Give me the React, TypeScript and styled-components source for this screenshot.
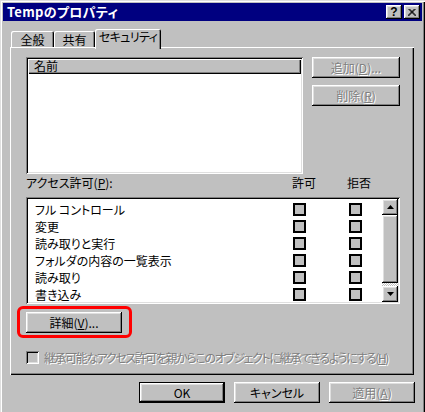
import React from "react";
import styled, { createGlobalStyle, css } from "styled-components";

const Global = createGlobalStyle`
  html, body { margin: 0; padding: 0; background: #c0c0c0; overflow: hidden; }
  body {
    font-family: "Noto Sans CJK JP", "Noto Sans", sans-serif;
    font-size: 12px;
    color: #000;
    font-feature-settings: "palt" 1;
  }
`;

const raised = css`
  box-shadow: inset -1px -1px #000, inset 1px 1px #fff, inset -2px -2px #808080,
    inset 2px 2px #dfdfdf;
`;

const sunken = css`
  box-shadow: inset 1px 1px #808080, inset -1px -1px #fff, inset 2px 2px #000,
    inset -2px -2px #dfdfdf;
`;

const Window = styled.div`
  width: 425px;
  height: 412px;
  box-sizing: border-box;
  background: #c0c0c0;
  box-shadow: inset 1px 1px #dfdfdf, inset 2px 2px #fff, inset -1px 0 #000,
    inset -2px 0 #808080;
  padding-top: 3px;
  display: flex;
  flex-direction: column;
`;

const TitleBar = styled.div`
  margin: 0 3px;
  height: 18px;
  background: #000080;
  color: #fff;
  display: flex;
  align-items: center;
  padding: 0 2px 0 4px;
`;

const TitleText = styled.span`
  font-weight: bold;
  font-size: 13px;
  line-height: 18px;
  letter-spacing: 0.3px;
`;

const CaptionGroup = styled.div`
  margin-left: auto;
  display: flex;
  gap: 2px;
`;

const CaptionButton = styled.div`
  width: 16px;
  height: 14px;
  background: #c0c0c0;
  ${raised};
  color: #000;
  display: flex;
  align-items: center;
  justify-content: center;
  font-weight: bold;
  font-family: "Liberation Sans", sans-serif;
  font-size: 12px;
  line-height: 14px;
`;

const TabStrip = styled.div`
  margin: 7px 0 0 11px;
  height: 20px;
  display: flex;
  align-items: flex-end;
`;

const Tab = styled.div<{ $w: number; $active?: boolean }>`
  width: ${(p) => p.$w}px;
  height: ${(p) => (p.$active ? 20 : 17)}px;
  box-sizing: border-box;
  background: #c0c0c0;
  border-radius: 2px 2px 0 0;
  box-shadow: inset 1px 1px #fff, inset -1px 0 #000, inset -2px 0 #808080;
  display: flex;
  justify-content: center;
  align-items: flex-start;
  padding-top: ${(p) => (p.$active ? 0 : 1)}px;
  line-height: 16px;
  white-space: nowrap;
  ${(p) =>
    p.$active &&
    css`
      position: relative;
      z-index: 1;
      margin-bottom: -1px;
      letter-spacing: -0.6px;
    `}
`;

const Panel = styled.div`
  margin: -1px 0 0 10px;
  width: 404px;
  height: 328px;
  box-sizing: border-box;
  padding: 10px 0 0 16px;
  box-shadow: inset 1px 1px #fff, inset -1px -1px #000, inset -2px -2px #808080;
  display: flex;
  flex-direction: column;
`;

const TopRow = styled.div`
  display: flex;
`;

const NameList = styled.div`
  width: 277px;
  height: 117px;
  box-sizing: border-box;
  background: #fff;
  ${sunken};
  padding: 2px;
`;

const ListHeader = styled.div`
  height: 15px;
  background: #c0c0c0;
  box-shadow: inset 1px 1px #fff, inset -1px -1px #000, inset -2px -2px #808080;
  padding-left: 6px;
  line-height: 14px;
`;

const SideButtons = styled.div`
  margin-left: 9px;
  display: flex;
  flex-direction: column;
  gap: 7px;
`;

const Button = styled.div<{ $w: number; $disabled?: boolean; $default?: boolean }>`
  width: ${(p) => p.$w}px;
  height: 21px;
  box-sizing: border-box;
  background: #c0c0c0;
  ${raised};
  display: flex;
  align-items: center;
  justify-content: center;
  line-height: 16px;
  white-space: nowrap;
  ${(p) =>
    p.$default &&
    css`
      border: 1px solid #000;
    `}
  ${(p) =>
    p.$disabled &&
    css`
      color: #808080;
      text-shadow: 1px 1px #fff;
    `}
`;

const U = styled.span`
  text-decoration: underline;
`;

const PermHeader = styled.div`
  margin: 1px 0 6px;
  height: 16px;
  display: grid;
  grid-template-columns: 266px 55px auto;
  line-height: 16px;
`;

const PermList = styled.div`
  width: 374px;
  height: 107px;
  box-sizing: border-box;
  background: #fff;
  ${sunken};
  padding: 2px;
  display: flex;
`;

const Rows = styled.div`
  flex: 1;
  padding-top: 2px;
`;

const Row = styled.div`
  height: 17px;
  display: grid;
  grid-template-columns: 258px 56px 13px;
  align-items: center;
  padding-left: 7px;
  line-height: 16px;
  white-space: nowrap;
`;

const PermBox = styled.div`
  width: 13px;
  height: 13px;
  box-sizing: border-box;
  border: 2px solid #000;
  background: #c0c0c0;
`;

const ScrollBar = styled.div`
  width: 16px;
  display: flex;
  flex-direction: column;
`;

const ScrollArrow = styled.div`
  width: 16px;
  height: 16px;
  box-sizing: border-box;
  background: #c0c0c0;
  ${raised};
  display: flex;
  align-items: center;
  justify-content: center;
`;

const Thumb = styled.div`
  flex: 1;
  background: #c0c0c0;
  ${raised};
`;

const Track = styled.div`
  height: 3px;
  background: repeating-conic-gradient(#fff 0 25%, #c0c0c0 0 50%) 0 0 / 2px 2px;
`;

const DetailRing = styled.div`
  margin: 2px 0 0 -9px;
  width: 115px;
  box-sizing: border-box;
  border: 3px solid #ff0000;
  border-radius: 6px;
  padding: 3px 7px 2px 6px;
`;

const InheritRow = styled.div`
  margin-top: 11px;
  height: 17px;
  display: flex;
  align-items: center;
  gap: 5px;
  color: #808080;
  text-shadow: 1px 1px #fff;
  line-height: 16px;
  white-space: nowrap;
  letter-spacing: -1.4px;
`;

const CheckBox = styled.div`
  width: 13px;
  height: 13px;
  box-sizing: border-box;
  background: #c0c0c0;
  ${sunken};
`;

const Footer = styled.div`
  margin: 7px 0 0 139px;
  display: flex;
  gap: 9px;
`;

const perms = [
  "フル コントロール",
  "変更",
  "読み取りと実行",
  "フォルダの内容の一覧表示",
  "読み取り",
  "書き込み",
];

export default function App() {
  return (
    <>
      <Global />
      <Window>
        <TitleBar>
          <TitleText>Tempのプロパティ</TitleText>
          <CaptionGroup>
            <CaptionButton>?</CaptionButton>
            <CaptionButton>
              <svg width="8" height="7" viewBox="0 0 8 7">
                <path d="M0.5 0 L7.5 7 M1.5 0 L8.5 7 M7.5 0 L0.5 7 M6.5 0 L-0.5 7" stroke="#000" strokeWidth="1" />
              </svg>
            </CaptionButton>
          </CaptionGroup>
        </TitleBar>

        <TabStrip>
          <Tab $w={43}>全般</Tab>
          <Tab $w={41}>共有</Tab>
          <Tab $w={66} $active>
            セキュリティ
          </Tab>
        </TabStrip>

        <Panel>
          <TopRow>
            <NameList>
              <ListHeader>名前</ListHeader>
            </NameList>
            <SideButtons>
              <Button $w={88} $disabled>
                追加(<U>D</U>)...
              </Button>
              <Button $w={88} $disabled>
                削除(<U>R</U>)
              </Button>
            </SideButtons>
          </TopRow>

          <PermHeader>
            <span>
              アクセス許可(<U>P</U>):
            </span>
            <span>許可</span>
            <span>拒否</span>
          </PermHeader>

          <PermList>
            <Rows>
              {perms.map((p) => (
                <Row key={p}>
                  <span>{p}</span>
                  <PermBox />
                  <PermBox />
                </Row>
              ))}
            </Rows>
            <ScrollBar>
              <ScrollArrow>
                <svg width="7" height="4" viewBox="0 0 7 4">
                  <path d="M3.5 0 L7 4 L0 4 Z" fill="#000" />
                </svg>
              </ScrollArrow>
              <Thumb />
              <Track />
              <ScrollArrow>
                <svg width="7" height="4" viewBox="0 0 7 4">
                  <path d="M0 0 L7 0 L3.5 4 Z" fill="#000" />
                </svg>
              </ScrollArrow>
            </ScrollBar>
          </PermList>

          <DetailRing>
            <Button $w={96}>
              詳細(<U>V</U>)...
            </Button>
          </DetailRing>

          <InheritRow>
            <CheckBox />
            <span>
              継承可能なアクセス許可を親からこのオブジェクトに継承できるようにする(<U>H</U>)
            </span>
          </InheritRow>
        </Panel>

        <Footer>
          <Button $w={86} $default>
            OK
          </Button>
          <Button $w={86}>キャンセル</Button>
          <Button $w={86} $disabled>
            適用(<U>A</U>)
          </Button>
        </Footer>
      </Window>
    </>
  );
}
